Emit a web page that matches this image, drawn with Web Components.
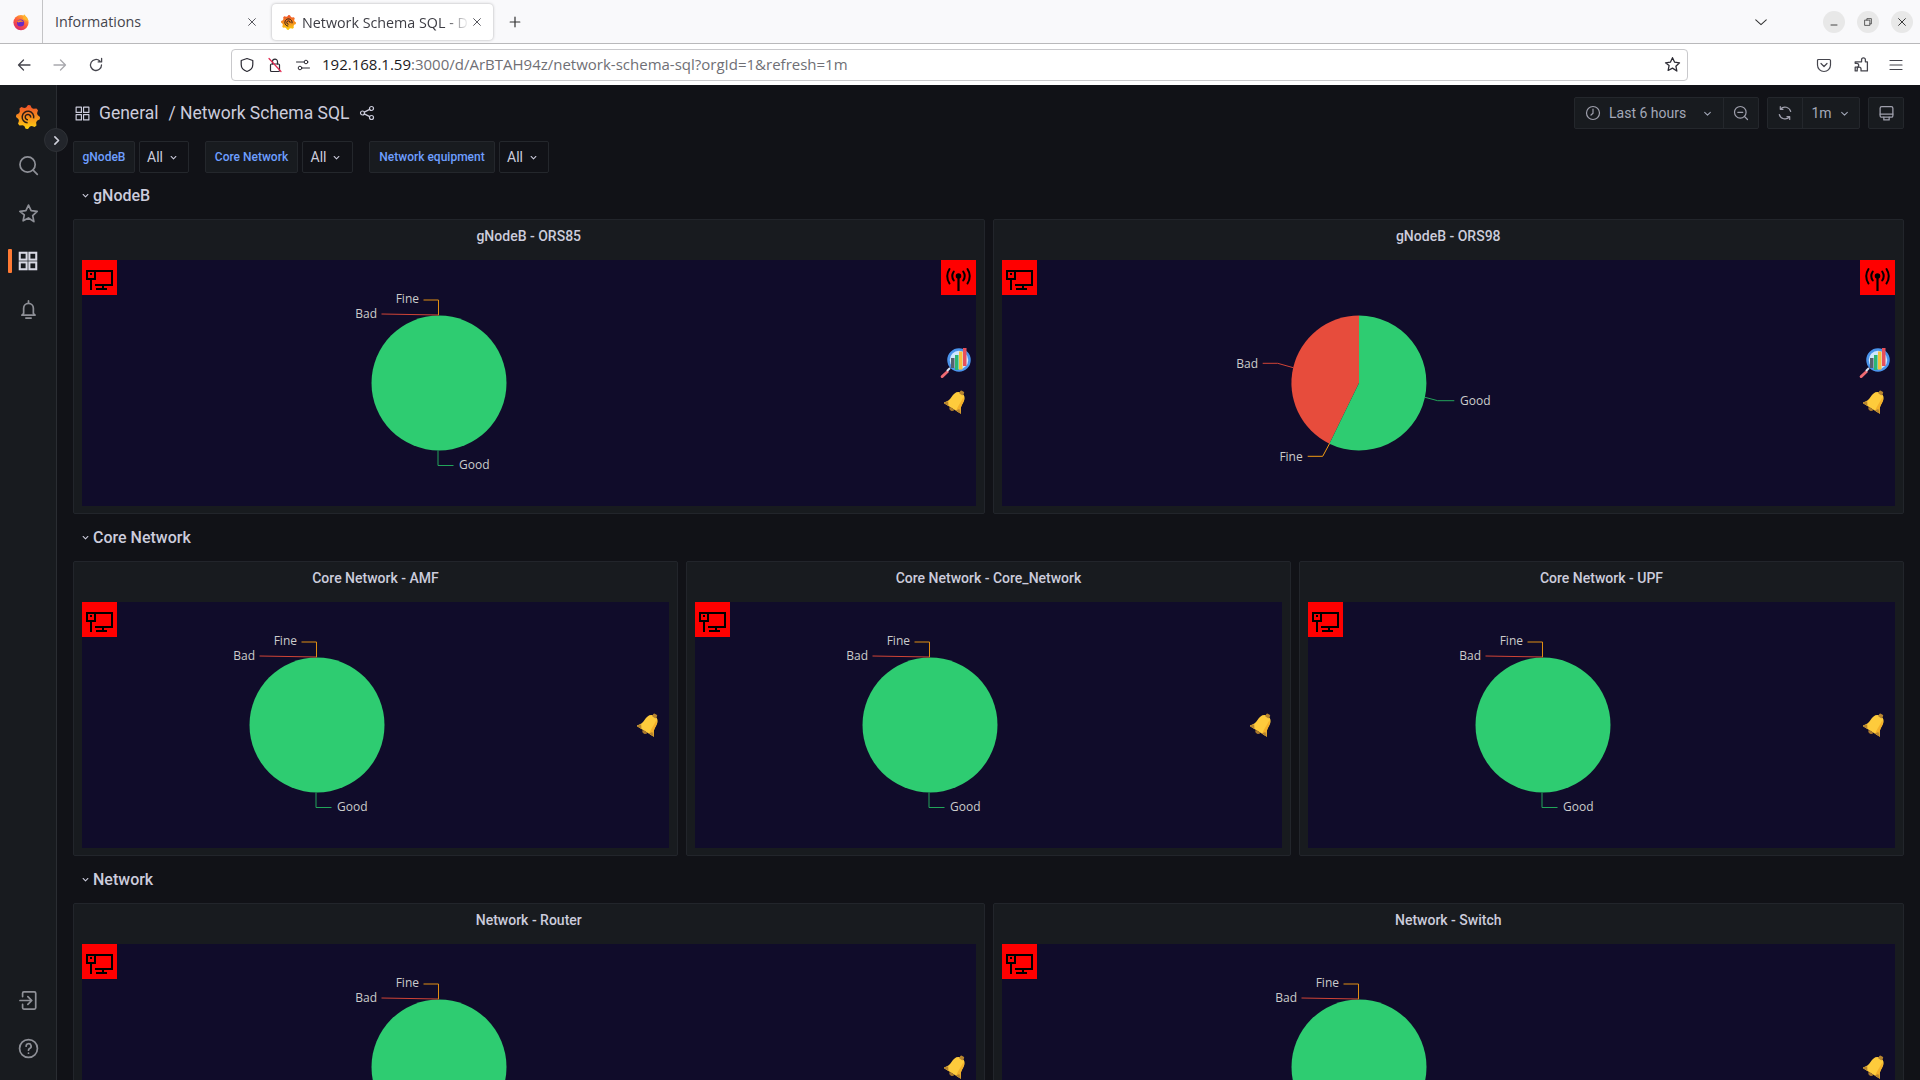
<!DOCTYPE html>
<html>
<head>
<meta charset="utf-8">
<title>Network Schema SQL</title>
<style>
  html, body { margin: 0; height: 100%; overflow: hidden; background: #111217; }
  body { display: flex; flex-direction: column; font-family: Roboto, "Liberation Sans", sans-serif; }
  .app { display: flex; flex: 1; min-height: 0; }
</style>
</head>
<body>
<browser-chrome></browser-chrome>
<div class="app">
  <side-nav></side-nav>
  <dash-main>
    <dash-toolbar></dash-toolbar>
    <var-bar></var-bar>

    <row-head>gNodeB</row-head>
    <panel-row cols="2">
      <dash-panel heading="gNodeB - ORS85">
        <node-icon kind="host" place="tl"></node-icon>
        <node-icon kind="antenna" place="tr"></node-icon>
        <node-icon kind="lens" place="lens"></node-icon>
        <node-icon kind="bell" place="low"></node-icon>
        <pie-chart></pie-chart>
      </dash-panel>
      <dash-panel heading="gNodeB - ORS98">
        <node-icon kind="host" place="tl"></node-icon>
        <node-icon kind="antenna" place="tr"></node-icon>
        <node-icon kind="lens" place="lens"></node-icon>
        <node-icon kind="bell" place="low"></node-icon>
        <pie-chart variant="split"></pie-chart>
      </dash-panel>
    </panel-row>

    <row-head>Core Network</row-head>
    <panel-row cols="3">
      <dash-panel heading="Core Network - AMF">
        <node-icon kind="host" place="tl"></node-icon>
        <node-icon kind="bell" place="mid"></node-icon>
        <pie-chart></pie-chart>
      </dash-panel>
      <dash-panel heading="Core Network - Core_Network">
        <node-icon kind="host" place="tl"></node-icon>
        <node-icon kind="bell" place="mid"></node-icon>
        <pie-chart></pie-chart>
      </dash-panel>
      <dash-panel heading="Core Network - UPF">
        <node-icon kind="host" place="tl"></node-icon>
        <node-icon kind="bell" place="mid"></node-icon>
        <pie-chart></pie-chart>
      </dash-panel>
    </panel-row>

    <row-head>Network</row-head>
    <panel-row cols="2">
      <dash-panel heading="Network - Router">
        <node-icon kind="host" place="tl"></node-icon>
        <node-icon kind="bell" place="mid"></node-icon>
        <pie-chart></pie-chart>
      </dash-panel>
      <dash-panel heading="Network - Switch">
        <node-icon kind="host" place="tl"></node-icon>
        <node-icon kind="bell" place="mid"></node-icon>
        <pie-chart></pie-chart>
      </dash-panel>
    </panel-row>
  </dash-main>
</div>

<script>
// grafana logo, same gear for sidebar and tab favicon
function gearPoints(teeth, outer, inner) {
  const pts = [];
  for (let i = 0; i < teeth * 4; i++) {
    const a = (i / (teeth * 4)) * Math.PI * 2 - Math.PI / 2;
    const r = i % 4 < 2 ? outer : inner;
    pts.push((12 + r * Math.cos(a)).toFixed(2) + ',' + (12 + r * Math.sin(a)).toFixed(2));
  }
  return pts.join(' ');
}
function grafanaLogo(size, id) {
  return `<svg width="${size}" height="${size}" viewBox="0 0 24 24">
    <defs><linearGradient id="${id}" x1="0" y1="0" x2="0" y2="1">
      <stop offset="0" stop-color="#ee4f2a"/><stop offset=".55" stop-color="#f7941d"/><stop offset="1" stop-color="#fcd20f"/>
    </linearGradient></defs>
    <polygon points="${gearPoints(8, 12, 9.8)}" fill="url(#${id})"/>
    <path d="M17.6 13.4A5.8 5.8 0 1 0 11.600 17.800" fill="none" stroke="#2a1c16" stroke-width="1.500"/>
    <path d="M14.600 12.600a2.700 2.700 0 1 0-2.600 2.200" fill="none" stroke="#2a1c16" stroke-width="1.500"/>
  </svg>`;
}
function line(d, w = 16, color = 'currentColor', sw = 1.3, vb = 16) {
  return `<svg width="${w}" height="${w}" viewBox="0 0 ${vb} ${vb}" fill="none" stroke="${color}" stroke-width="${sw}" stroke-linecap="round" stroke-linejoin="round">${d}</svg>`;
}
const GRID = '<rect x="2" y="2" width="5" height="5"/><rect x="9" y="2" width="5" height="5"/><rect x="2" y="9" width="5" height="5"/><rect x="9" y="9" width="5" height="5"/>';
const STAR = '<path d="M8 1.6l2 4.2 4.6.6-3.4 3.2.9 4.6L8 11.4 3.9 13.6l.9-4.6L1.4 6.4 6 5.8z"/>';
const CHEV = '<path d="M4.5 6.5L8 10l3.5-3.5"/>';

class BrowserChrome extends HTMLElement {
  constructor() {
    super();
    this.attachShadow({ mode: 'open' }).innerHTML = `
      <style>
        :host { display: block; font-family: "Open Sans", "Noto Sans", sans-serif; color: #2b2a33; background: #f9f9fb; }
        .tabs { display: flex; align-items: center; height: 43px; border-bottom: 1px solid #b9b9bb; }
        .fx { width: 42px; height: 43px; display: flex; align-items: center; justify-content: center; border-right: 1px solid #c4c4c6; }
        .tab { display: flex; align-items: center; box-sizing: border-box; font-size: 14.3px; white-space: nowrap; }
        .tab.idle { width: 229px; padding: 0 14px 0 12px; color: #45454d; }
        .tab.on { width: 221px; height: 36px; margin-top: 1px; padding: 0 10px 0 9px; background: #fff; border-radius: 4px; box-shadow: 0 0 3px rgba(0,0,0,.3); color: #3d3d44; }
        .tab .t { flex: 1; overflow: hidden; }
        .tab.on .t { margin-left: 6px; margin-right: 2px; -webkit-mask-image: linear-gradient(to right, #000 86%, transparent); mask-image: linear-gradient(to right, #000 86%, transparent); }
        .plus { width: 44px; display: flex; justify-content: center; color: #333; }
        .fill { flex: 1; }
        .winbtns { display: flex; align-items: center; gap: 12px; padding-right: 7px; margin-left: 55px; }
        .wb { width: 22px; height: 22px; border-radius: 50%; background: #e8e8e8; display: flex; align-items: center; justify-content: center; color: #333; }
        .nav { display: flex; align-items: center; height: 41px; padding: 0 6px; background: #fff; }
        .nb { width: 36px; height: 36px; display: flex; align-items: center; justify-content: center; color: #45454d; }
        .nb.off { color: #a9a9ae; }
        .url { flex: 1; height: 32px; box-sizing: border-box; margin: 0 118px 0 117px; border: 1px solid #c9c9cc; border-radius: 4px; display: flex; align-items: center; padding-left: 1px; background: #fff; font-size: 15px; color: #6f6f75; white-space: nowrap; }
        .url b { font-weight: 400; color: #1c1b22; }
        .ui { width: 28px; display: flex; justify-content: center; color: #2b2a33; }
        .url .txt { margin: -2px 0 0 5px; flex: 1; }
        .ustar { margin-right: 6px; display: flex; color: #2b2a33; }
      </style>
      <div class="tabs">
        <div class="fx">
          <svg width="18" height="18" viewBox="0 0 18 18">
            <defs><linearGradient id="ff" x1="0.8" y1="0" x2="0.2" y2="1"><stop offset="0" stop-color="#ffbd2e"/><stop offset=".5" stop-color="#ff5a3c"/><stop offset="1" stop-color="#d6246e"/></linearGradient></defs>
            <circle cx="9" cy="9.6" r="7.6" fill="url(#ff)"/>
            <path d="M12 1.2c1.4 1.6 4 3.4 4.4 7L11 6z" fill="#ffb52e"/>
            <circle cx="8.6" cy="10" r="3.6" fill="#6a2bc4"/>
            <path d="M5 8.4c2-1.6 5-1.4 6.6.6-2-.6-4-.4-5.2.6z" fill="#ff8a2c"/>
          </svg>
        </div>
        <div class="tab idle"><span class="t">Informations</span>
          ${line('<path d="M3.5 3.5l9 9M12.5 3.5l-9 9"/>', 12, '#45454d', 1.2)}</div>
        <div class="tab on">${grafanaLogo(15, 'favi')}<span class="t">Network Schema SQL - Dashboards</span>
          ${line('<path d="M3.5 3.5l9 9M12.5 3.5l-9 9"/>', 12, '#45454d', 1.2)}</div>
        <div class="plus">${line('<path d="M8 2.5v11M2.5 8h11"/>', 14, 'currentColor', 1.4)}</div>
        <div class="fill"></div>
        ${line('<path d="M2 5.5L8 11l6-5.5"/>', 14, '#333', 1.2)}
        <div class="winbtns">
          <div class="wb">${line('<path d="M4 12h8"/>', 12, '#333', 1.2)}</div>
          <div class="wb">${line('<rect x="4" y="5.5" width="6.5" height="7"/><path d="M6.5 5.5V3.5h6v7h-2"/>', 12, '#333', 1)}</div>
          <div class="wb">${line('<path d="M3.5 3.5l9 9M12.5 3.5l-9 9"/>', 12, '#333', 1.3)}</div>
        </div>
      </div>
      <div class="nav">
        <div class="nb">${line('<path d="M14 8H2.5M7.5 3l-5 5 5 5"/>', 16)}</div>
        <div class="nb off">${line('<path d="M2 8h11.5M8.5 3l5 5-5 5"/>', 16)}</div>
        <div class="nb">${line('<path d="M13.5 8a5.5 5.5 0 1 1-1.7-4M13.6 1.5v3.4h-3.4"/>', 16)}</div>
        <div class="url">
          <span class="ui">${line('<path d="M8 1.5l5.8 2v4c0 3.6-2.4 5.9-5.8 7-3.4-1.1-5.8-3.4-5.8-7v-4z"/>', 16, 'currentColor', 1.2)}</span>
          <span class="ui">${line('<rect x="3.5" y="7" width="9" height="7.5" rx="1"/><path d="M5.5 7V4.6a2.5 2.5 0 0 1 5 0V7"/><path d="M2 1.5l12 13" stroke="#e22850"/>', 16, 'currentColor', 1.2)}</span>
          <span class="ui">${line('<circle cx="11" cy="5" r="1.8"/><circle cx="5" cy="11" r="1.8"/><path d="M1.5 5h7.5M7 11h7.5"/>', 16, 'currentColor', 1)}</span>
          <span class="txt"><b>192.168.1.59</b>:3000/d/ArBTAH94z/network-schema-sql?orgId=1&amp;refresh=1m</span>
          <span class="ustar">${line(STAR, 17, 'currentColor', 1.2)}</span>
        </div>
        <div class="nb">${line('<path d="M2.5 2.5h11a1 1 0 0 1 1 1V8a6.5 6.5 0 0 1-13 0V3.5a1 1 0 0 1 1-1z"/><path d="M5 6.5l3 3 3-3"/>', 16, 'currentColor', 1.2)}</div>
        <div class="nb">${line('<path d="M9 5.500V3.500a1.800 1.800 0 0 1 3.600 0v2h1.900v8.500h-6v-1.800a1.800 1.800 0 0 0-3.600 0V14H3v-3.500h1.500a1.800 1.800 0 0 0 0-3.600H3V5.500z"/>', 17, 'currentColor', 1.2)}</div>
        <div class="nb">${line('<path d="M2 3.500h12M2 8h12M2 12.500h12"/>', 16, 'currentColor', 1.2)}</div>
      </div>`;
  }
}
customElements.define('browser-chrome', BrowserChrome);

class SideNav extends HTMLElement {
  constructor() {
    super();
    this.attachShadow({ mode: 'open' }).innerHTML = `
      <style>
        :host { display: flex; flex-direction: column; align-items: center; box-sizing: border-box; position: relative; width: 57px; flex: none; background: #181b1f; border-right: 1px solid #2a2d32; color: #8e9097; }
        .logo { height: 32px; margin: 16px 0 8px; display: flex; align-items: center; }
        .item { height: 48px; width: 100%; display: flex; align-items: center; justify-content: center; position: relative; }
        .item.on { color: #d8d9e4; }
        .item.on::before { content: ""; position: absolute; left: 8px; top: 12px; width: 4px; height: 24px; background: #ff7a33; border-radius: 1px; }
        .fill { flex: 1; }
        .toggle { position: absolute; left: 44px; top: 43px; width: 24px; height: 24px; border-radius: 50%; background: #22252b; border: 1px solid #2e3136; box-sizing: border-box; display: flex; align-items: center; justify-content: center; color: #d0d1dc; z-index: 2; }
      </style>
      <div class="logo">${grafanaLogo(24, 'logo')}</div>
      <div class="item">${line('<circle cx="7.300" cy="7.300" r="5.800"/><path d="M11.500 11.500l3.200 3.200"/>', 21, 'currentColor', 1.300)}</div>
      <div class="item">${line(STAR, 21, 'currentColor', 1.300)}</div>
      <div class="item on">${line(GRID, 22, 'currentColor', 1.500).replace('stroke-linejoin="round"', 'stroke-linejoin="miter"')}</div>
      <div class="item">${line('<path d="M8 1.500v1.300M4.300 11V7a3.700 3.700 0 0 1 7.400 0v4l1.300 1.300H3zM6 14.500h4"/>', 21, 'currentColor', 1.300)}</div>
      <div class="fill"></div>
      <div class="item">${line('<path d="M3.500 5V2.500a1 1 0 0 1 1-1h8a1 1 0 0 1 1 1v11a1 1 0 0 1-1 1h-8a1 1 0 0 1-1-1V11M1.500 8h8.500M7.500 5l3 3-3 3"/>', 21, 'currentColor', 1.300)}</div>
      <div class="item" style="margin-bottom:8px">${line('<circle cx="8" cy="8" r="6.800"/><path d="M6.200 6.300a1.900 1.900 0 1 1 2.700 1.700c-.6.300-.9.700-.9 1.300M8 11.500v.1"/>', 21, 'currentColor', 1.300)}</div>
      <div class="toggle">${line('<path d="M6 3.500L10.500 8 6 12.500"/>', 13, 'currentColor', 2)}</div>`;
  }
}
customElements.define('side-nav', SideNav);

class DashMain extends HTMLElement {
  constructor() {
    super();
    this.attachShadow({ mode: 'open' }).innerHTML = `
      <style>
        :host { display: block; flex: 1; min-width: 0; padding: 0 16px; overflow: hidden; background: #111217; color: #ccccdc; }
      </style>
      <slot></slot>`;
  }
}
customElements.define('dash-main', DashMain);

class DashToolbar extends HTMLElement {
  constructor() {
    super();
    this.attachShadow({ mode: 'open' }).innerHTML = `
      <style>
        :host { display: flex; align-items: center; height: 32px; padding-top: 12px; font-size: 17.5px; color: #ccccdc; }
        .ti { display: flex; color: #ccccdc; margin: 0 8px 0 1px; }
        .sl { margin-left: 10px; }
        .share { display: flex; margin-left: 10px; }
        .fill { flex: 1; }
        .grp { display: flex; height: 32px; box-sizing: border-box; background: #181b1f; border: 1px solid #24272c; border-radius: 2px; font-size: 14px; color: #a3a8b8; }
        .grp + .grp { margin-left: 8px; }
        .cell { display: flex; align-items: center; justify-content: center; box-sizing: border-box; }
        .cell + .cell { border-left: 1px solid #24272c; }
        .ico { color: #ccccdc; opacity: .75; display: flex; }
      </style>
      <span class="ti">${line(GRID, 17, 'currentColor', 1.100)}</span>
      <span>General</span><span class="sl">/ Network Schema SQL</span>
      <span class="share">${line('<circle cx="12.500" cy="3.500" r="2"/><circle cx="3.500" cy="8" r="2"/><circle cx="12.500" cy="12.500" r="2"/><path d="M5.300 7.100l5.400-2.700M5.300 8.900l5.400 2.700"/>', 16, 'currentColor', 1.200)}</span>
      <div class="fill"></div>
      <div class="grp">
        <div class="cell" style="width:148px;justify-content:flex-start;padding-left:10px">
          <span class="ico" style="margin-right:8px">${line('<circle cx="8" cy="8" r="6.500"/><path d="M8 4v4.300L6 10"/>', 16, 'currentColor', 1.200)}</span>
          <span style="margin-right:15px">Last 6 hours</span>${line(CHEV, 13, 'currentColor', 1.300)}
        </div>
        <div class="cell" style="width:35px"><span class="ico">${line('<circle cx="7.300" cy="7.300" r="5.800"/><path d="M11.500 11.500l3 3M4.800 7.300h5"/>', 16, 'currentColor', 1.200)}</span></div>
      </div>
      <div class="grp">
        <div class="cell" style="width:34px"><span class="ico">${line('<path d="M13.700 6.500A6 6 0 0 0 3.500 4M2.300 9.500a6 6 0 0 0 10.200 2.500M3.300 1.500V4.300H6M12.700 14.500V11.700H10"/>', 16, 'currentColor', 1.200)}</span></div>
        <div class="cell" style="width:57px"><span style="margin-right:6px">1m</span>${line(CHEV, 13, 'currentColor', 1.300)}</div>
      </div>
      <div class="grp">
        <div class="cell" style="width:34px"><span class="ico">${line('<rect x="2" y="1.500" width="12" height="10" rx="1.500"/><path d="M2 8.500h12M5.500 11.500v2.500h5v-2.500"/>', 17, 'currentColor', 1.200)}</span></div>
      </div>`;
  }
}
customElements.define('dash-toolbar', DashToolbar);

class VarBar extends HTMLElement {
  constructor() {
    super();
    const vars = [['gNodeB', 62, 50], ['Core Network', 93, 51], ['Network equipment', 126, 50]];
    this.attachShadow({ mode: 'open' }).innerHTML = `
      <style>
        :host { display: flex; height: 32px; margin: 12px 0 -1px; gap: 16px; }
        .v { display: flex; gap: 4px; }
        .lab, .val { height: 32px; box-sizing: border-box; border: 1px solid #24272c; border-radius: 2px; display: flex; align-items: center; justify-content: center; }
        .lab { background: #181b1f; color: #6e9fff; font-size: 12px; font-weight: 500; }
        .val { background: #111217; color: #ccccdc; font-size: 14px; gap: 5px; padding-right: 2px; }
      </style>
      ${vars.map(([name, w, vw]) => `<div class="v">
        <div class="lab" style="width:${w}px">${name}</div>
        <div class="val" style="width:${vw}px">All ${line(CHEV, 11, 'currentColor', 1.500)}</div>
      </div>`).join('')}`;
  }
}
customElements.define('var-bar', VarBar);

class RowHead extends HTMLElement {
  constructor() {
    super();
    this.attachShadow({ mode: 'open' }).innerHTML = `
      <style>
        :host { display: flex; align-items: center; height: 47px; padding-left: 7px; font-size: 16px; font-weight: 500; color: #ccccdc; }
        svg { margin-right: 2px; }
      </style>
      ${line(CHEV, 11, 'currentColor', 1.500)}<slot></slot>`;
  }
}
customElements.define('row-head', RowHead);

class PanelRow extends HTMLElement {
  constructor() {
    super();
    this.attachShadow({ mode: 'open' }).innerHTML = `
      <style>
        :host { display: grid; gap: 8px; grid-template-columns: repeat(2, 1fr); }
        :host([cols="3"]) { grid-template-columns: repeat(3, 1fr); }
      </style>
      <slot></slot>`;
  }
}
customElements.define('panel-row', PanelRow);

class DashPanel extends HTMLElement {
  constructor() {
    super();
    this.attachShadow({ mode: 'open' }).innerHTML = `
      <style>
        :host { display: flex; flex-direction: column; box-sizing: border-box; height: 295px; background: #181b1f; border: 1px solid #22252b; border-radius: 2px; }
        .title { height: 32px; margin-bottom: 8px; display: flex; align-items: center; justify-content: center; font-size: 14px; font-weight: 500; color: #ccccdc; }
        .canvas { flex: 1; position: relative; margin: 0 8px 7px; background: #100c2a; overflow: hidden; }
      </style>
      <div class="title"></div>
      <div class="canvas"><slot></slot></div>`;
  }
  connectedCallback() {
    this.shadowRoot.querySelector('.title').textContent = this.getAttribute('heading');
  }
}
customElements.define('dash-panel', DashPanel);

const ICONS = {
  host: `<svg width="35" height="35" viewBox="0 0 35 35" fill="none" stroke="#000" stroke-width="2" shape-rendering="crispEdges">
    <rect x="5" y="11" width="8" height="8"/><rect x="8" y="13" width="2" height="2" fill="#000" stroke="none"/>
    <path d="M9 19v11M14 11h16v14H13M21 25v3M14 29h11"/></svg>`,
  antenna: `<svg width="35" height="35" viewBox="0 0 35 35" fill="none" stroke="#000" stroke-width="2">
    <circle cx="17.500" cy="16" r="1.800" fill="#000"/><path d="M17.500 16v15" stroke-width="2.200"/>
    <path d="M12.800 11.500a8 8 0 0 0 0 9M22.200 11.500a8 8 0 0 1 0 9M8.500 9a13.500 13.500 0 0 0 0 14.500M26.500 9a13.500 13.500 0 0 1 0 14.500" stroke-linecap="round"/></svg>`,
  lens: `<svg width="32" height="33" viewBox="0 0 32 33">
    <path d="M2.200 27.500l6-5.500 1.800 2-6 5.700a1 1 0 0 1-1.800-2.200z" fill="#ef6a72"/>
    <path d="M8 23l3-3" stroke="#d9e4f2" stroke-width="2"/>
    <circle cx="20" cy="12" r="10.500" fill="#cfe6fb" stroke="#4a94ec" stroke-width="2.500"/>
    <rect x="12" y="10" width="3.500" height="10" fill="#56606e"/>
    <rect x="16" y="7" width="3.500" height="15" fill="#2bb673"/>
    <rect x="20" y="3.500" width="3.500" height="18" fill="#f7bf3a"/>
    <rect x="24" y="0" width="3.500" height="18" fill="#e8505b"/></svg>`,
  bell: `<svg width="23" height="26" viewBox="0 0 21 24">
    <g transform="rotate(32 11 12)">
      <path d="M10.500 1.500c4.500 0 6 3.500 6 8 0 3.500 1.200 5.500 3.500 8.500H1c2.400-3 3.500-5 3.500-8.500 0-4.500 1.500-8 6-8z" fill="#fecb3c"/>
      <path d="M14 4c2 1.500 2.500 3.500 2.500 5.500 0 3.500 1.200 5.500 3.500 8.500h-5c-1-3.500-.5-10-1-14z" fill="#f4b02a"/>
      <rect x="8.500" y="-.5" width="4" height="3.500" rx="1" fill="#b7852f"/>
      <path d="M1 18l3-3.500 2.500 3.500zM14.500 18l2-3 3.500 3z" fill="#b7852f"/>
      <path d="M8 18h5a2.500 2.500 0 0 1-5 0z" fill="#a9782c"/>
    </g></svg>`
};

class NodeIcon extends HTMLElement {
  constructor() {
    super();
    this.attachShadow({ mode: 'open' }).innerHTML = `
      <style>
        :host { position: absolute; display: flex; z-index: 1; }
        :host([place="tl"]) { left: 0; top: 0; background: #f00; }
        :host([place="tr"]) { right: 0; top: 0; background: #f00; }
        :host([place="lens"]) { right: 5px; top: 88px; }
        :host([place="low"]) { right: 9px; top: 130px; }
        :host([place="mid"]) { right: 9px; top: calc(50% - 12px); }
      </style>
      <span style="display:flex"></span>`;
  }
  connectedCallback() {
    this.shadowRoot.querySelector('span').innerHTML = ICONS[this.getAttribute('kind')];
  }
}
customElements.define('node-icon', NodeIcon);

class PieChart extends HTMLElement {
  constructor() {
    super();
    this.attachShadow({ mode: 'open' }).innerHTML = `
      <style>
        :host { position: absolute; left: 40%; top: 50%; width: 300px; height: 220px; transform: translate(-50%, -50%); display: block; }
        text { font: 12px "Open Sans", "Noto Sans", sans-serif; fill: #cccccc; dominant-baseline: central; }
        path.l { fill: none; stroke-width: 1; }
      </style>
      <svg width="300" height="220" viewBox="-150 -110 300 220"></svg>`;
  }
  connectedCallback() {
    const split = this.getAttribute('variant') === 'split';
    this.shadowRoot.querySelector('svg').innerHTML = split ? `
      <path d="M0 0L0 -67.500A67.500 67.500 0 0 0 -29.600 60.700Z" fill="#e74c3c"/>
      <path d="M0 0L0 -67.500A67.500 67.500 0 1 1 -29.600 60.700Z" fill="#2ecc71"/>
      <path class="l" d="M-65.700 -15.300L-81.300 -19.700H-96.300" stroke="#d04436"/>
      <path class="l" d="M66 14.300L78.700 17.700H95.300" stroke="#22a45a"/>
      <path class="l" d="M-29.300 60.300L-36.300 73.300H-51.300" stroke="#f39c12"/>
      <text x="-101" y="-19.500" text-anchor="end">Bad</text>
      <text x="101" y="17.500">Good</text>
      <text x="-56.300" y="73.300" text-anchor="end">Fine</text>` : `
      <circle r="67.500" fill="#2ecc71"/>
      <path class="l" d="M-57.500 -69L0 -68" stroke="#d04436"/>
      <path class="l" d="M-15.500 -83H-.5V-68" stroke="#e08e12"/>
      <path class="l" d="M-1 67.500V82.500H14.500" stroke="#22a45a"/>
      <text x="-62" y="-70" text-anchor="end">Bad</text>
      <text x="-20" y="-85" text-anchor="end">Fine</text>
      <text x="20" y="81">Good</text>`;
  }
}
customElements.define('pie-chart', PieChart);
</script>
</body>
</html>
